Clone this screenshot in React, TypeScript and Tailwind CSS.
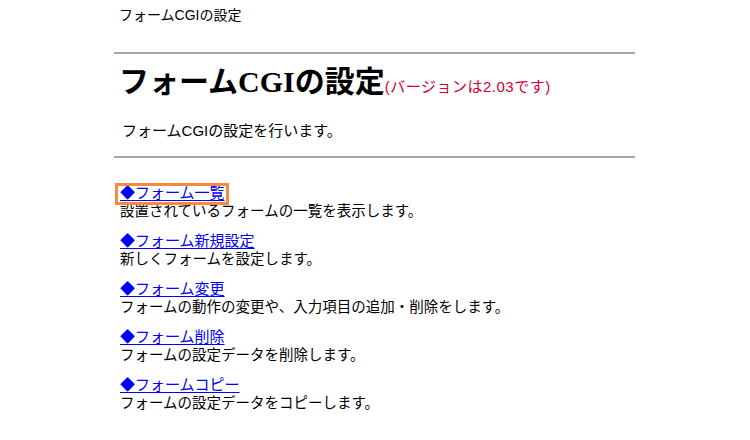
import React from 'react';

const menu = [
  { label: 'フォーム一覧', desc: '設置されているフォームの一覧を表示します。', focused: true },
  { label: 'フォーム新規設定', desc: '新しくフォームを設定します。' },
  { label: 'フォーム変更', desc: 'フォームの動作の変更や、入力項目の追加・削除をします。' },
  { label: 'フォーム削除', desc: 'フォームの設定データを削除します。' },
  { label: 'フォームコピー', desc: 'フォームの設定データをコピーします。' },
];

const App: React.FC = () => {
  return (
    <div className="w-[750px] h-[440px] bg-white text-black overflow-hidden font-['Liberation_Sans','Noto_Sans_CJK_JP',sans-serif]">
      <div className="ml-[114px] w-[521px]">
        {/* Page title bar */}
        <p className="mt-[6px] pl-[5px] text-[14px] leading-[18px]">フォームCGIの設定</p>

        <hr className="mt-[28px] border-0 border-t-2 border-[#a8a8a8]" />

        {/* Heading */}
        <h1 className="mt-[8px] pl-[5px] h-[40px] text-[30px] leading-[40px] font-bold whitespace-nowrap font-['Liberation_Serif','Noto_Sans_CJK_JP',serif]">
          フォームCGIの設定
          <span className="text-[15px] font-normal tracking-[0.5px] text-[#d00035] font-['Liberation_Sans','Noto_Sans_CJK_JP',sans-serif]">
            (バージョンは2.03です)
          </span>
        </h1>

        <p className="mt-[19px] pl-[8px] text-[15px] leading-[20px]">フォームCGIの設定を行います。</p>

        <hr className="mt-[15px] border-0 border-t-2 border-[#a8a8a8]" />

        {/* Menu */}
        <div className="mt-[26px] pl-[6px] flex flex-col gap-[12px]">
          {menu.map((m) => (
            <div key={m.label}>
              <div className="text-[15px] leading-[18px]">
                <a href="#" className="relative text-[#0000ff] underline underline-offset-[2px]">
                  ◆{m.label}
                  {m.focused && (
                    <span className="absolute -left-[5px] -right-[4px] -top-[1px] -bottom-[4px] border-[3px] border-[#f68b3f] pointer-events-none" />
                  )}
                </a>
              </div>
              <p className="text-[14.5px] leading-[18px] whitespace-nowrap">{m.desc}</p>
            </div>
          ))}
        </div>
      </div>
    </div>
  );
};

export default App;
